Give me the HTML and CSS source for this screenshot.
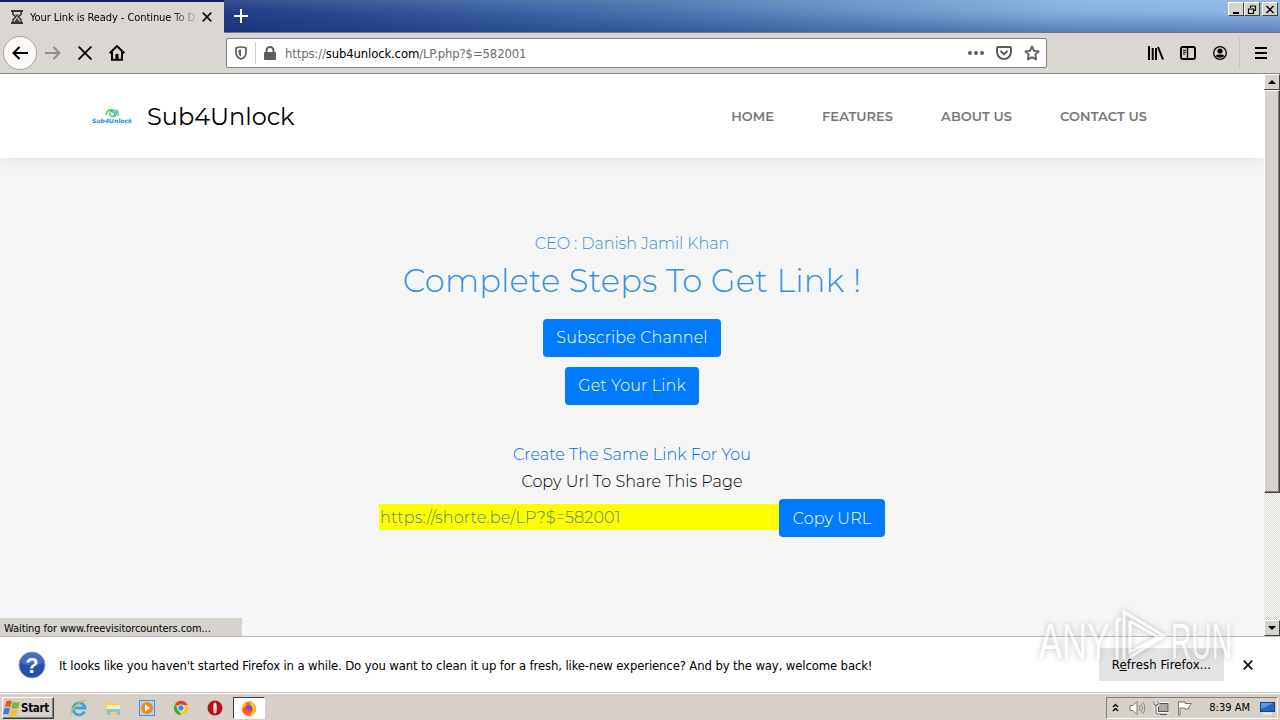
FILE: index.html
```html
<!DOCTYPE html>
<html lang="en">
<head>
    <meta charset="UTF-8">
    <title>Your Link is Ready - Continue To Destination</title>
    <link rel="stylesheet" href="styles.css">
</head>
<body>
<div class="tabs">
    <div class="tab">
        <svg class="tab-icon" width="12" height="14" viewBox="0 0 12 14"><path d="M0 1h12M0 13h12" stroke="#333" stroke-width="2"/><path d="M2 2v2.500L4.800 7 2 9.500V12M10 2v2.500L7.200 7 10 9.500V12" fill="none" stroke="#333" stroke-width="1.500"/><path d="M4 4.500h4L6 7zM6 8l3 4H3z" fill="#444"/></svg>
        <div class="tab-title">Your Link is Ready - Continue To D</div>
        <svg width="10" height="10" viewBox="0 0 10 10"><path d="M.7.7l8.600 8.600M9.300.7L.7 9.300" stroke="#111" stroke-width="1.700"/></svg>
    </div>
    <div class="title-bar">
        <svg width="14" height="14" viewBox="0 0 14 14"><path d="M7 0v14M0 7h14" stroke="#fff" stroke-width="2"/></svg>
        <div class="window-buttons">
            <div class="win-btn"><svg width="10" height="9" viewBox="0 0 10 9"><path d="M2 8h6" stroke="#000" stroke-width="2"/></svg></div>
            <div class="win-btn"><svg width="10" height="9" viewBox="0 0 10 9"><path d="M3.500 3V1h5v4.500H6.500M1.500 4h5v4.500h-5zM1 4h6M3 1h6" fill="none" stroke="#000" stroke-width="1.200"/></svg></div>
            <div class="win-btn win-close"><svg width="10" height="9" viewBox="0 0 10 9"><path d="M1.500 1l7 7M8.500 1l-7 7" stroke="#000" stroke-width="1.500"/></svg></div>
        </div>
    </div>
</div>
<div class="toolbar">
    <div class="back"><svg width="16" height="14" viewBox="0 0 16 14"><path d="M16 7H1.500M7.500 1l-6 6 6 6" fill="none" stroke="#000" stroke-width="2"/></svg></div>
    <svg class="forward" width="16" height="14" viewBox="0 0 16 14"><path d="M0 7h14.500M8.500 1l6 6-6 6" fill="none" stroke="#8f8d88" stroke-width="2"/></svg>
    <svg class="stop" width="14" height="14" viewBox="0 0 14 14"><path d="M.5.5l13 13M13.500.5l-13 13" stroke="#000" stroke-width="1.900"/></svg>
    <svg class="home" width="16" height="16" viewBox="0 0 16 16"><path d="M.7 8.300L8 1l7.300 7.300M3 7v7.800h10V7" fill="none" stroke="#000" stroke-width="2"/><path d="M6.500 9h3v6h-3z"/></svg>
    <div class="address">
        <svg width="12" height="14" viewBox="0 0 12 14"><path d="M6 1c2 0 3.500.4 5 1v4.500C11 10 9 12 6 13 3 12 1 10 1 6.500V2c1.500-.6 3-1 5-1z" fill="none" stroke="#5c5c5c" stroke-width="1.700"/><path d="M6 3.500v7C4.300 9.500 3.500 8 3.500 6.500V4z" fill="#5c5c5c"/></svg>
        <div class="separator"></div>
        <svg width="12" height="14" viewBox="0 0 12 14"><path d="M2.500 7V4.500a3.500 3.500 0 0 1 7 0V7" fill="none" stroke="#5c5c5c" stroke-width="2"/><rect y="6" width="12" height="8" rx="1" fill="#5c5c5c"/></svg>
        <div class="url">https://<span class="host">sub4unlock.com</span>/LP.php?$=582001</div>
        <svg class="dots" width="16" height="4" viewBox="0 0 16 4"><circle cx="2" cy="2" r="2"/><circle cx="8" cy="2" r="2"/><circle cx="14" cy="2" r="2"/></svg>
        <svg class="pocket" width="16" height="14" viewBox="0 0 16 14"><path d="M2 1h12q1 0 1 1v4a7 7 0 0 1-14 0V2q0-1 1-1z" fill="none" stroke="#5c5c5c" stroke-width="2"/><path d="M4.500 5L8 8.300 11.500 5" fill="none" stroke="#5c5c5c" stroke-width="2"/></svg>
        <svg width="16" height="16" viewBox="0 0 16 16"><path d="M8 1.500l2 4.300 4.700.6-3.400 3.300.8 4.700L8 12.200l-4.100 2.200.8-4.700L1.300 6.400 6 5.800z" fill="none" stroke="#5c5c5c" stroke-width="1.800" stroke-linejoin="round"/></svg>
    </div>
    <div class="tools">
        <svg width="16" height="14" viewBox="0 0 16 14"><path d="M1 0v14M4.700 2v12M8 2v12M10 1l5 12.500" fill="none" stroke="#000" stroke-width="2"/></svg>
        <svg width="16" height="14" viewBox="0 0 16 14"><rect x="1" y="1" width="14" height="12" rx="2" fill="none" stroke="#000" stroke-width="2"/><path d="M7.500 1v12" stroke="#000" stroke-width="1.500"/><path d="M3 4.200h3M3 6.200h3M3 8.200h2" stroke="#000"/></svg>
        <svg width="14" height="14" viewBox="0 0 14 14"><circle cx="7" cy="7" r="6.300" fill="none" stroke="#000" stroke-width="1.300"/><circle cx="7" cy="5" r="2.600"/><path d="M2.500 9.500c2-1.500 7-1.500 9 0C10 12.500 4 12.500 2.500 9.500z"/></svg>
    </div>
    <div class="tools-line"></div>
    <svg width="12" height="12" viewBox="0 0 12 12"><path d="M0 1h12M0 6h12M0 11h12" stroke="#000" stroke-width="2"/></svg>
</div>
<div class="viewport">
    <div class="page">
        <header class="header">
            <svg class="logo" width="40" height="18" viewBox="0 0 40 18"><path d="M14 8q1-6 7-5 4 1 3 5-3 3-6 0-1-4 3-4" fill="none" stroke="#43cf68" stroke-width="1.500"/><path d="M24 3q3 2 2 6M20 5q4 0 2 4" fill="none" stroke="#2ab5a8" stroke-width="1.200"/><text x="0" y="15.500" textLength="40" lengthAdjust="spacingAndGlyphs">Sub4Unlock</text></svg>
            <div class="brand">Sub4Unlock</div>
            <nav class="menu">
                <a>HOME</a>
                <a>FEATURES</a>
                <a>ABOUT US</a>
                <a>CONTACT US</a>
            </nav>
        </header>
        <main class="content">
            <div class="ceo">CEO : Danish Jamil Khan</div>
            <h1>Complete Steps To Get Link !</h1>
            <button class="btn subscribe">Subscribe Channel</button>
            <button class="btn get-link">Get Your Link</button>
            <a class="create">Create The Same Link For You</a>
            <div class="share">Copy Url To Share This Page</div>
            <div class="copy-row">
                <div class="copy-url">https://shorte.be/LP?$=582001</div>
                <button class="btn copy">Copy URL</button>
            </div>
        </main>
        <div class="status">Waiting for www.freevisitorcounters.com...</div>
    </div>
    <div class="scrollbar">
        <div class="scroll-btn"><svg width="8" height="4" viewBox="0 0 8 4"><path d="M0 4l4-4 4 4z"/></svg></div>
        <div class="thumb"></div>
        <div class="scroll-btn scroll-down"><svg width="8" height="4" viewBox="0 0 8 4"><path d="M0 0h8L4 4z"/></svg></div>
    </div>
</div>
<div class="notice">
    <svg width="28" height="28" viewBox="0 0 28 28"><circle cx="14" cy="14" r="13" fill="#2450ab" stroke="#8ea4cc"/><path d="M3 12a11 11 0 0 1 22 0q-11 5-22 0z" fill="#5f87cf" opacity=".5"/><text class="question" x="14" y="22" text-anchor="middle">?</text></svg>
    <div class="notice-text">It looks like you haven't started Firefox in a while. Do you want to clean it up for a fresh, like-new experience? And by the way, welcome back!</div>
    <button class="refresh">R<u>e</u>fresh Firefox...</button>
    <svg class="notice-close" width="10" height="10" viewBox="0 0 10 10"><path d="M.7.7l8.600 8.600M9.300.7L.7 9.300" stroke="#111" stroke-width="1.700"/></svg>
</div>
<div class="taskbar">
    <div class="start">
        <svg width="18" height="18" viewBox="0 0 16 16"><path d="M3 2q3-1.500 5 0L6.500 7.500q-2-1.500-5 0z" fill="#e8572a"/><path d="M9 2.500q3 1.500 6 0L13.500 8q-3 1.500-6 0z" fill="#7ab541"/><path d="M1.200 8.500q3-1.500 5 0L4.800 14q-2-1.500-5 0z" fill="#3c7fd0"/><path d="M7.200 9q3 1.500 6 0L11.800 14.500q-3 1.500-6 0z" fill="#f6bd2c"/></svg>
        <span>Start</span>
    </div>
    <div class="apps">
        <svg width="18" height="18" viewBox="0 0 18 18"><path d="M14.500 12.500A6 6 0 1 1 15 9H5" fill="none" stroke="#3ba4df" stroke-width="2.800"/><path d="M2 16Q-1 14 5 7.500 14-1 16.500 2.500" fill="none" stroke="#e6ba38" stroke-width="1.300"/></svg>
        <svg width="18" height="18" viewBox="0 0 18 18"><path d="M2 3h6l1 2h7v11H2z" fill="#efcf65"/><path d="M3 6h13v4H3z" fill="#fff0a5"/><path d="M3 16v-5q0-1 1-1h11q1 0 1 1v5h-3v-3H6v3z" fill="#7fc4e8"/></svg>
        <svg width="18" height="18" viewBox="0 0 18 18"><rect x="1.500" y="1.500" width="15" height="15" fill="#b7d4ea" stroke="#4b93ca"/><circle cx="9" cy="9" r="6" fill="#f38916"/><path d="M7 5.500l5.500 3.500L7 12.500z" fill="#fff"/></svg>
        <svg width="18" height="18" viewBox="0 0 18 18"><circle cx="9" cy="9" r="7" fill="#fbc52d"/><path d="M9 9L3 5.300A7 7 0 0 1 15.500 6H9z" fill="#e34133"/><path d="M3 5.300L6.500 11 9 16A7 7 0 0 1 3 5.300z" fill="#38a852"/><circle cx="9" cy="9" r="3.500" fill="#fff"/><circle cx="9" cy="9" r="2.700" fill="#4285e8"/></svg>
        <svg width="18" height="18" viewBox="0 0 18 18"><circle cx="9" cy="9" r="7.500" fill="#b5121b"/><ellipse cx="9" cy="9" rx="1.800" ry="5.500" fill="#eee2df"/></svg>
        <div class="app-active"><svg width="18" height="18" viewBox="0 0 18 18"><circle cx="9" cy="10" r="7.200" fill="#ff6a20"/><path d="M2 11q-1-5 3-8l1 3zM10 1q6 4 6.200 9-1 6-7 7 5-4 3-8-3-3-2.200-8z" fill="#ffc42c"/><circle cx="9" cy="9.500" r="3.300" fill="#774bd1"/><path d="M2.500 9q4-1 6 2l3-1q-1 4-4 3-4 0-5-4z" fill="#ff4d36"/></svg></div>
    </div>
    <div class="tray">
        <svg class="chevrons" width="7" height="9" viewBox="0 0 7 9"><path d="M1 4l2.500-2.500L6 4M1 8l2.500-2.500L6 8" fill="none" stroke="#000" stroke-width="1.400"/></svg>
        <svg class="volume" width="17" height="16" viewBox="0 0 17 16"><path d="M1 5.500h3l4-4v13l-4-4H1z" fill="#fff" stroke="#777"/><path d="M10 5q2 3 0 6M12 3.500q3 4.500 0 9M14 2q3.500 6 0 12" fill="none" stroke="#888"/></svg>
        <svg class="network" width="16" height="16" viewBox="0 0 16 16"><rect x="5.500" y="3.500" width="10" height="8" fill="#aaa" stroke="#fff" stroke-width="2.500"/><rect x="5.500" y="3.500" width="9.500" height="8" fill="#aaa" stroke="#555"/><path d="M7 14.500h7" stroke="#555"/><path d="M1 1v4h4V1M3 5v9h4" fill="none" stroke="#fff" stroke-width="2.500"/><path d="M1 1v4h4V1M3 5v9h4" fill="none" stroke="#555"/></svg>
        <svg class="flag" width="16" height="16" viewBox="0 0 16 16"><path d="M2 2h6v1.500h6.500L12.500 6l-1 3H7.500V8H3v7H1.500V1.500z" fill="#fff" stroke="#777"/></svg>
        <span class="clock">8:39 AM</span>
        <svg width="15" height="14" viewBox="0 0 15 14"><rect x=".5" y="1.500" width="14" height="9" fill="#2766bd" stroke="#184384"/><path d="M1 2h12L1 8z" fill="#5c9ade"/><path d="M3 12.500h9" stroke="#eee" stroke-width="2"/></svg>
    </div>
</div>
<svg class="watermark" width="204" height="64" viewBox="0 0 204 64">
    <text x="3" y="52" textLength="71" lengthAdjust="spacingAndGlyphs">ANY</text>
    <text x="135" y="52" textLength="61" lengthAdjust="spacingAndGlyphs">RUN</text>
    <path d="M81 52V15q0-3 4-3M88 52V5l40 24-34 21M94 14v31l33-17M94 14l33 19"/>
</svg>
</body>
</html>
```
FILE: styles.css
```css
* {
    box-sizing: border-box;
}
body {
    margin: 0;
    width: 1280px;
    height: 720px;
    overflow: hidden;
    display: flex;
    flex-direction: column;
    position: relative;
    font-family: "DejaVu Sans Condensed", "DejaVu Sans", sans-serif;
    font-size: 11px;
    color: #000;
    background: #d6d3ce;
}
svg {
    display: block;
    flex-shrink: 0;
}

.tabs {
    display: flex;
    height: 33px;
    flex-shrink: 0;
    background: #0a246a;
}
.tab {
    width: 224px;
    height: 31px;
    margin-top: 2px;
    padding: 0 12px 1px 11px;
    display: flex;
    align-items: center;
    background: #dad7d2;
}
.tab-title {
    width: 166px;
    margin: 0 6px 0 7px;
    white-space: nowrap;
    overflow: hidden;
    letter-spacing: -0.08px;
    -webkit-mask-image: linear-gradient(to right, #000 140px, transparent 170px);
    mask-image: linear-gradient(to right, #000 140px, transparent 170px);
}
.title-bar {
    flex: 1;
    display: flex;
    justify-content: space-between;
    padding: 9px 2px 0 10px;
    background: linear-gradient(to bottom, rgba(255,255,255,.1), transparent 40%, rgba(10,36,106,.35)), linear-gradient(to right, #1e3c84, #4770ae 40%, #86aede 80%, #8db5e4);
    border-bottom: 1px solid #77777a;
}
.window-buttons {
    display: flex;
    margin-top: -7px;
}
.win-btn {
    width: 16px;
    height: 14px;
    padding: 2px;
    background: #d6d3ce;
    border: 1px solid;
    border-color: #fff #404040 #404040 #fff;
}
.win-close {
    margin-left: 2px;
}

.toolbar {
    display: flex;
    align-items: center;
    height: 41px;
    flex-shrink: 0;
    padding: 0 12px 0 3px;
    background: #dad7d2;
    border-bottom: 1px solid #858585;
}
.back {
    width: 34px;
    height: 34px;
    display: flex;
    align-items: center;
    justify-content: center;
    border-radius: 50%;
    border: 1px solid #a7a39b;
    background: #faf9f8;
}
.forward {
    margin-left: 8px;
}
.stop {
    margin-left: 17px;
}
.home {
    margin-left: 17px;
}
.address {
    display: flex;
    align-items: center;
    width: 821px;
    height: 30px;
    margin-left: 101px;
    padding: 0 6px 0 8px;
    background: #fff;
    border: 1px solid #83817c;
    border-radius: 2px;
}
.separator {
    width: 1px;
    height: 22px;
    margin: 0 8px;
    background: #ccc;
}
.url {
    flex: 1;
    margin-left: 9px;
    font-size: 13px;
    color: #6c6c6c;
    letter-spacing: -0.15px;
}
.host {
    color: #000;
}
.dots {
    fill: #5c5c5c;
}
.pocket {
    margin: 0 12px;
}
.tools {
    display: flex;
    align-items: center;
    gap: 16px;
    margin-left: 101px;
}
.tools svg:last-child {
    margin-left: 1px;
}
.tools-line {
    width: 1px;
    height: 32px;
    margin: 0 15px 0 12px;
    background: #c6c3bd;
}

.viewport {
    display: flex;
    height: 562px;
    flex-shrink: 0;
}
.page {
    position: relative;
    width: 1264px;
    background: #f6f6f6;
    font-family: Montserrat, Inter, sans-serif;
    font-size: 16px;
    font-weight: 300;
    overflow: hidden;
}
.header {
    display: flex;
    align-items: center;
    height: 84px;
    padding: 0 117px 0 92px;
    background: #fff;
    box-shadow: 0 0 15px rgba(0,0,0,.12);
}
.logo text {
    font: italic bold 6px "DejaVu Sans", sans-serif;
    fill: #218fc8;
}
.brand {
    margin-left: 15px;
    font-size: 24px;
    font-weight: 400;
}
.menu {
    display: flex;
    gap: 48px;
    margin-left: auto;
    font-size: 13px;
    font-weight: 600;
    letter-spacing: 0.06px;
    color: #777;
}
.content {
    display: flex;
    flex-direction: column;
    align-items: center;
    padding-top: 74px;
    line-height: 24px;
}
.ceo {
    color: #3490dc;
    letter-spacing: -0.05px;
}
h1 {
    margin: 6px 0 0;
    font-size: 32px;
    font-weight: 300;
    line-height: 38px;
    letter-spacing: 0.2px;
    color: #3490dc;
}
.btn {
    height: 38px;
    padding: 0;
    font: inherit;
    color: #fff;
    background: #007bff;
    border: 0;
    border-radius: 4px;
    letter-spacing: 0.12px;
}
.subscribe {
    width: 178px;
    margin-top: 19px;
}
.get-link {
    width: 134px;
    margin-top: 10px;
}
.create {
    margin-top: 38px;
    color: #006ae0;
    letter-spacing: 0.06px;
}
.share {
    margin-top: 3px;
    letter-spacing: 0.06px;
}
.copy-row {
    display: flex;
    align-items: center;
    margin-top: 5px;
}
.copy-url {
    width: 400px;
    height: 26px;
    margin-top: -2px;
    padding-left: 1px;
    line-height: 27px;
    background: #ff0;
    color: #4a8570;
    letter-spacing: 0.15px;
}
.copy {
    width: 106px;
    padding-top: 1px;
}
.status {
    position: absolute;
    left: 0;
    bottom: 0;
    width: 242px;
    height: 18px;
    padding-left: 4px;
    font: 11px/21px "DejaVu Sans Condensed", sans-serif;
    letter-spacing: -0.08px;
    background: #d6d3ce;
}
.scrollbar {
    display: flex;
    flex-direction: column;
    width: 16px;
    background: repeating-conic-gradient(#d6d3ce 0 25%, #fff 0 50%) 0 0 / 2px 2px;
}
.scroll-btn {
    display: flex;
    align-items: center;
    justify-content: center;
    height: 16px;
    background: #d6d3ce;
    border: 1px solid;
    border-color: #fff #404040 #404040 #fff;
}
.thumb {
    height: 403px;
    background: #d6d3ce;
    border: 1px solid;
    border-color: #fff #404040 #404040 #fff;
    box-shadow: inset -1px -1px #808080;
}
.scroll-down {
    margin-top: auto;
}

.notice {
    display: flex;
    align-items: center;
    height: 57px;
    flex-shrink: 0;
    padding: 1px 27px 0 18px;
    background: #fff;
    border-top: 1px solid #bbb;
    border-bottom: 1px solid #c4c1bb;
}
.question {
    font: bold 22px "Liberation Sans", sans-serif;
    fill: #fff;
}
.notice-text {
    margin-left: 13px;
    font-size: 13px;
    white-space: nowrap;
    letter-spacing: -0.137px;
}
.refresh {
    width: 125px;
    height: 33px;
    margin: -1px 0 0 auto;
    padding: 0 0 1px;
    border: 0;
    background: #e3e3e3;
    font: inherit;
    font-size: 13px;
    letter-spacing: 0.1px;
}
.notice-close {
    margin-left: 19px;
}

.taskbar {
    display: flex;
    align-items: center;
    height: 27px;
    flex-shrink: 0;
    padding: 1px 2px 0;
    background: #d6d0c8;
    border-top: 1px solid #fff;
}
.start {
    display: flex;
    align-items: center;
    width: 52px;
    height: 22px;
    font-weight: bold;
    font-size: 11.5px;
    letter-spacing: -0.3px;
    border: 1px solid;
    border-color: #fff #404040 #404040 #fff;
    box-shadow: inset -1px -1px #808080;
}
.apps {
    display: flex;
    align-items: center;
    gap: 16px;
    margin-left: 16px;
}
.app-active {
    display: flex;
    align-items: center;
    justify-content: center;
    width: 32px;
    height: 22px;
    margin-left: -7px;
    background: #fff;
    border: 1px solid;
    border-color: #404040 #fff #fff #404040;
}
.tray {
    display: flex;
    align-items: center;
    width: 172px;
    height: 22px;
    margin-left: auto;
    padding: 0 2px 0 5px;
    border: 1px solid;
    border-color: #808080 #fff #fff #808080;
}
.volume {
    margin-left: 10px;
}
.network {
    margin-left: 7px;
}
.flag {
    margin-left: 8px;
}
.clock {
    margin: 0 10px 0 auto;
}

.watermark {
    position: absolute;
    left: 1036px;
    top: 607px;
    fill: none;
    stroke: #fff;
    stroke-width: 3;
    opacity: .6;
    filter: drop-shadow(0 0 3px rgba(0,0,0,.4));
}
.watermark text {
    font: 50px "Liberation Sans", sans-serif;
    fill: #fff;
    stroke: none;
}
```
